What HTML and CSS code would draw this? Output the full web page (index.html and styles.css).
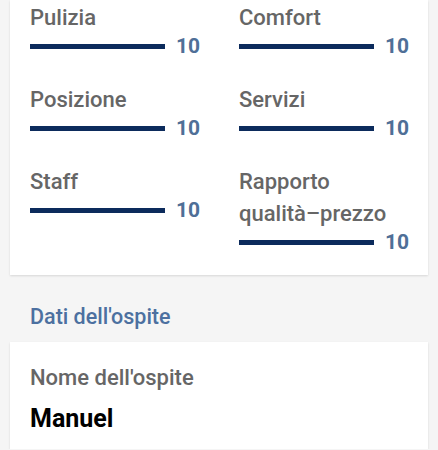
FILE: index.html
```html
<!DOCTYPE html>
<html lang="it">
<head>
    <meta charset="UTF-8">
    <meta name="viewport" content="width=device-width, initial-scale=1.0">
    <title>Recensione</title>
    <link rel="stylesheet" href="styles.css">
</head>
<body>
    <div class="card scores">
        <div class="score">
            <div class="score-label">Pulizia</div>
            <div class="score-row"><span class="bar"></span><span class="value">10</span></div>
        </div>
        <div class="score">
            <div class="score-label">Comfort</div>
            <div class="score-row"><span class="bar"></span><span class="value">10</span></div>
        </div>
        <div class="score">
            <div class="score-label">Posizione</div>
            <div class="score-row"><span class="bar"></span><span class="value">10</span></div>
        </div>
        <div class="score">
            <div class="score-label">Servizi</div>
            <div class="score-row"><span class="bar"></span><span class="value">10</span></div>
        </div>
        <div class="score">
            <div class="score-label">Staff</div>
            <div class="score-row"><span class="bar"></span><span class="value">10</span></div>
        </div>
        <div class="score">
            <div class="score-label">Rapporto<br>qualità–prezzo</div>
            <div class="score-row"><span class="bar"></span><span class="value">10</span></div>
        </div>
    </div>

    <h2 class="section-title">Dati dell'ospite</h2>

    <div class="card guest">
        <div class="field-label">Nome dell'ospite</div>
        <div class="field-value">Manuel</div>
    </div>
</body>
</html>
```

FILE: styles.css
```css
body {
    margin: 0;
    font-family: 'Roboto', 'Liberation Sans', sans-serif;
    background-color: #f5f5f5;
}

.card {
    background: #ffffff;
    margin: 0 10px;
    box-shadow: 0 1px 2px rgba(0, 0, 0, 0.12);
}

.scores {
    display: grid;
    grid-template-columns: 209px 189px;
    row-gap: 26px;
    padding: 2px 20px 21px;
}

.score-label {
    font-size: 22px;
    font-weight: 500;
    line-height: 32px;
    color: #666666;
}

.score-row {
    display: flex;
    align-items: center;
    height: 24px;
}

.bar {
    width: 135px;
    height: 5px;
    background: #0c2b5c;
}

.value {
    margin-left: 11px;
    font-size: 21px;
    font-weight: 700;
    line-height: 24px;
    color: #4f6f97;
}

.section-title {
    margin: 0;
    padding: 30px 30px 13px;
    font-size: 21.5px;
    font-weight: 500;
    line-height: 24px;
    color: #4c70a0;
}

.guest {
    padding: 20px 20px 14px;
}

.field-label {
    font-size: 22px;
    font-weight: 500;
    line-height: 32px;
    color: #666666;
}

.field-value {
    margin-top: 9px;
    font-size: 25px;
    font-weight: 700;
    line-height: 32px;
    color: #000000;
}
```
